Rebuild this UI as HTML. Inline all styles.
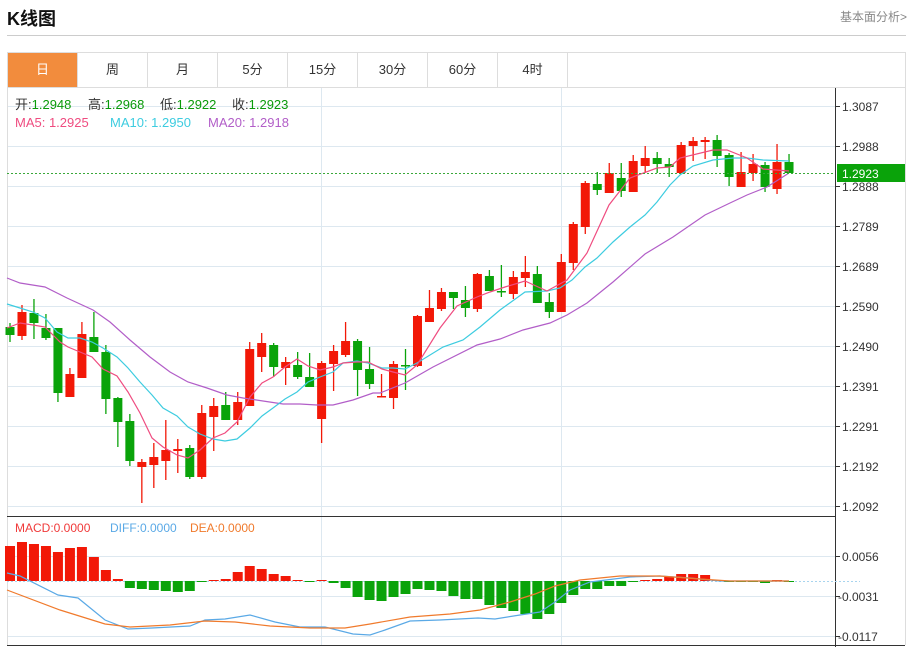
<!DOCTYPE html>
<html><head><meta charset="utf-8"><style>
body{margin:0;background:#fff;font-family:"Liberation Sans","Noto Sans CJK SC",sans-serif;}
#w{position:relative;width:913px;height:647px;overflow:hidden;}
.h{position:absolute;left:7px;top:5px;font-size:18px;font-weight:bold;color:#111;}
.r{position:absolute;right:6px;top:8px;font-size:12px;color:#888;}
.hl{position:absolute;left:7px;top:35px;width:899px;height:1px;background:#ccc;}
.tabs{position:absolute;left:7px;top:52px;width:897px;height:34px;border:1px solid #ddd;border-bottom:1px solid #ddd;}
.tab{position:absolute;top:0;width:69px;height:34px;border-right:1px solid #ddd;text-align:center;line-height:34px;font-size:13px;color:#333;}
.tab.a{background:#f28c3d;color:#fff;}
svg{position:absolute;left:0;top:0;}
</style></head><body><div id="w">
<div class="h">K线图</div><div class="r">基本面分析&gt;</div><div class="hl"></div>
<div class="tabs">
<div class="tab a" style="left:0">日</div><div class="tab" style="left:70px">周</div><div class="tab" style="left:140px">月</div><div class="tab" style="left:210px">5分</div><div class="tab" style="left:280px">15分</div><div class="tab" style="left:350px">30分</div><div class="tab" style="left:420px">60分</div><div class="tab" style="left:490px">4时</div>
</div>
<svg id="s" width="913" height="647" font-family="Liberation Sans, Noto Sans CJK SC, sans-serif">
<g stroke="#dde8f0" stroke-width="1">
<line x1="7" y1="106.5" x2="835" y2="106.5"/><line x1="7" y1="146.5" x2="835" y2="146.5"/><line x1="7" y1="186.5" x2="835" y2="186.5"/><line x1="7" y1="226.5" x2="835" y2="226.5"/><line x1="7" y1="266.5" x2="835" y2="266.5"/><line x1="7" y1="306.5" x2="835" y2="306.5"/><line x1="7" y1="346.5" x2="835" y2="346.5"/><line x1="7" y1="386.5" x2="835" y2="386.5"/><line x1="7" y1="426.5" x2="835" y2="426.5"/><line x1="7" y1="466.5" x2="835" y2="466.5"/><line x1="7" y1="506.5" x2="835" y2="506.5"/>
<line x1="7" y1="556.5" x2="835" y2="556.5"/><line x1="7" y1="596.5" x2="835" y2="596.5"/><line x1="7" y1="636.5" x2="835" y2="636.5"/>
<line x1="321.5" y1="88" x2="321.5" y2="645"/><line x1="561.5" y1="88" x2="561.5" y2="645"/>
</g>
<line x1="7" y1="87.5" x2="905" y2="87.5" stroke="#ddd"/>
<line x1="7.5" y1="52" x2="7.5" y2="645" stroke="#ddd"/><line x1="905.5" y1="52" x2="905.5" y2="645" stroke="#ddd"/>
<line x1="7" y1="516.5" x2="835" y2="516.5" stroke="#333"/>
<line x1="7" y1="645.5" x2="905" y2="645.5" stroke="#333"/>
<line x1="835.5" y1="88" x2="835.5" y2="647" stroke="#333"/>
<g id="c"></g>
<polyline fill="none" stroke="#b25ec8" stroke-width="1.2" points="7,278 20,283 45,287 67,298 93,310 110,322 130,340 150,357 170,372 188,382 207,388 227,395 243,398 263,401 283,404 300,404 317,405 333,405 353,400 373,393 380,393 405,383 433,367 477,345 500,339 523,330 550,323 567,315 587,303 613,282 645,254 673,237 705,215 730,203 747,195 767,187 789,173"/>
<polyline fill="none" stroke="#3dcce0" stroke-width="1.2" points="7,304 20,308 33,312 45,318 57,332 68,338 80,338 92,342 103,348 117,357 128,368 140,382 152,395 163,408 177,416 188,427 200,434 213,439 225,441 237,439 250,428 262,416 273,408 285,399 297,392 308,382 320,377 333,372 343,363 357,361 368,363 382,368 393,368 405,369 417,363 443,347 463,340 480,327 500,310 525,292 547,291 560,288 572,280 585,267 597,258 613,242 630,227 645,215 657,202 670,185 680,175 693,166 713,160 733,158 747,158 763,160 789,161"/>
<polyline fill="none" stroke="#ef4c80" stroke-width="1.2" points="7,328 20,323 33,325 45,327 60,342 68,347 80,352 92,357 103,369 117,376 128,392 140,413 152,438 163,447 177,455 188,458 200,450 213,438 225,433 237,422 250,397 262,383 273,377 285,367 297,359 308,366 320,370 333,367 343,363 357,362 368,362 382,369 393,372 405,375 417,365 440,328 457,306 477,297 490,292 505,287 525,281 547,291 567,280 587,253 609,205 630,178 657,168 670,167 680,158 713,150 727,150 747,158 763,169 789,171"/>
<line x1="7" y1="173.5" x2="835" y2="173.5" stroke="#3aa83a" stroke-dasharray="2,2"/>
<line x1="7" y1="581.5" x2="860" y2="581.5" stroke="#a8d4ee" stroke-dasharray="2,2"/>
<g id="m"></g>
<polyline fill="none" stroke="#5aa9e6" stroke-width="1.2" points="7,573 20,576 58,595 78,598 105,620 128,629 152,628 190,626 205,620 225,619 250,615 275,622 300,627 325,627 353,634 370,635 385,630 410,621 440,620 478,618 495,619 520,615 540,612 555,602 570,590 590,582 630,577 660,576 690,578 720,581 789,581"/>
<polyline fill="none" stroke="#f07a2c" stroke-width="1.2" points="7,590 60,610 105,624 130,627 170,625 205,621 235,622 270,626 310,628 345,628 370,624 410,617 450,614 480,610 510,602 535,594 555,586 580,580 620,576 660,576 700,579 730,581 789,581"/>
<g stroke="#333"><line x1="835" y1="106.5" x2="840" y2="106.5"/><line x1="835" y1="146.5" x2="840" y2="146.5"/><line x1="835" y1="186.5" x2="840" y2="186.5"/><line x1="835" y1="226.5" x2="840" y2="226.5"/><line x1="835" y1="266.5" x2="840" y2="266.5"/><line x1="835" y1="306.5" x2="840" y2="306.5"/><line x1="835" y1="346.5" x2="840" y2="346.5"/><line x1="835" y1="386.5" x2="840" y2="386.5"/><line x1="835" y1="426.5" x2="840" y2="426.5"/><line x1="835" y1="466.5" x2="840" y2="466.5"/><line x1="835" y1="506.5" x2="840" y2="506.5"/><line x1="835" y1="556.5" x2="840" y2="556.5"/><line x1="835" y1="596.5" x2="840" y2="596.5"/><line x1="835" y1="636.5" x2="840" y2="636.5"/></g>
<g font-size="12" fill="#333">
<text x="842" y="111">1.3087</text><text x="842" y="151">1.2988</text><text x="842" y="191">1.2888</text><text x="842" y="231">1.2789</text><text x="842" y="271">1.2689</text><text x="842" y="311">1.2590</text><text x="842" y="351">1.2490</text><text x="842" y="391">1.2391</text><text x="842" y="431">1.2291</text><text x="842" y="471">1.2192</text><text x="842" y="511">1.2092</text>
<text x="842" y="561">0.0056</text><text x="838" y="601">-0.0031</text><text x="838" y="641">-0.0117</text>
</g>
<rect x="837" y="164" width="68" height="18" fill="#0aa30a"/>
<text x="842" y="178" font-size="12" fill="#fff">1.2923</text>
<g font-size="13">
<text x="15" y="109" fill="#333">开:<tspan fill="#0a9a0a">1.2948</tspan></text>
<text x="88" y="109" fill="#333">高:<tspan fill="#0a9a0a">1.2968</tspan></text>
<text x="160" y="109" fill="#333">低:<tspan fill="#0a9a0a">1.2922</tspan></text>
<text x="232" y="109" fill="#333">收:<tspan fill="#0a9a0a">1.2923</tspan></text>
<text x="15" y="127" fill="#ef4c80">MA5: 1.2925</text><text x="110" y="127" fill="#3dcce0">MA10: 1.2950</text><text x="208" y="127" fill="#b25ec8">MA20: 1.2918</text>
</g>
<g font-size="12"><text x="15" y="532" fill="#f03a3a">MACD:0.0000</text><text x="110" y="532" fill="#5aa9e6">DIFF:0.0000</text><text x="190" y="532" fill="#f07a2c">DEA:0.0000</text></g>
</svg>
<script>
var C=[[327,335,323,342,0],[312,336,305,340,1],[313,323,299,339,0],[328,338,314,340,0],[328,393,328,402,0],[374,397,368,397,1],[334,378,322,378,1],[337,352,312,352,0],[352,399,345,414,0],[398,422,397,447,0],[421,461,414,466,0],[462,467,459,503,1],[457,465,443,488,1],[450,461,420,480,1],[449,451,439,473,1],[448,477,445,479,0],[413,477,405,479,1],[406,417,398,451,1],[405,420,392,420,0],[402,420,392,425,1],[349,406,342,406,1],[343,357,333,372,1],[345,367,343,377,0],[362,368,357,385,1],[365,377,352,379,0],[377,387,353,387,0],[363,419,361,443,1],[351,364,345,391,1],[341,355,322,357,1],[341,370,339,396,0],[369,384,347,389,0],[396,397,374,397,1],[364,398,361,409,1],[365,366,349,390,0],[316,366,315,367,1],[308,322,290,322,1],[292,309,288,311,1],[292,298,292,309,0],[300,308,286,317,0],[274,309,273,312,1],[276,291,270,291,0],[291,292,265,297,0],[277,294,271,299,1],[272,278,256,287,1],[274,303,266,303,0],[302,312,293,318,0],[262,312,254,312,1],[224,263,222,270,1],[183,227,181,234,1],[184,190,172,195,0],[173,193,163,193,1],[178,191,163,197,0],[161,192,155,192,1],[158,166,146,173,1],[158,164,152,173,0],[164,167,158,177,0],[145,173,142,173,1],[141,146,137,161,1],[140,142,137,159,1],[140,156,135,167,0],[155,177,153,186,0],[172,187,152,187,1],[164,173,154,181,1],[165,187,162,192,0],[162,189,144,194,1],[162,173,154,173,0]];
var M=[546,542,544,546,552,548,547,557,570,579,588,589,590,591,592,591,582,580,579,572,566,569,574,576,580,581,580,583,588,597,600,601,597,594,589,590,591,596,599,599,605,608,611,614,619,614,603,595,589,589,586,586,582,580,579,577,574,574,575,580,581,582,582,583,580,582];
var ns="http://www.w3.org/2000/svg",g=document.getElementById('c'),m=document.getElementById('m');
function el(p,t,a){var e=document.createElementNS(ns,t);for(var k in a)e.setAttribute(k,a[k]);p.appendChild(e);}
C.forEach(function(c,i){var x=10+i*11.985,col=c[4]?'#f21807':'#0aa30a';
el(g,'line',{x1:x,x2:x,y1:c[2],y2:c[3],stroke:col,'stroke-width':1.3});
el(g,'rect',{x:x-4.5,y:c[0],width:9,height:Math.max(1.5,c[1]-c[0]),fill:col});});
M.forEach(function(v,i){var x=10+i*11.985,z=581;var up=v<z;
el(m,'rect',{x:x-5,y:up?v:z,width:10,height:Math.max(1,Math.abs(v-z)),fill:up?'#f21807':'#0aa30a'});});
</script>
</div></body></html>
